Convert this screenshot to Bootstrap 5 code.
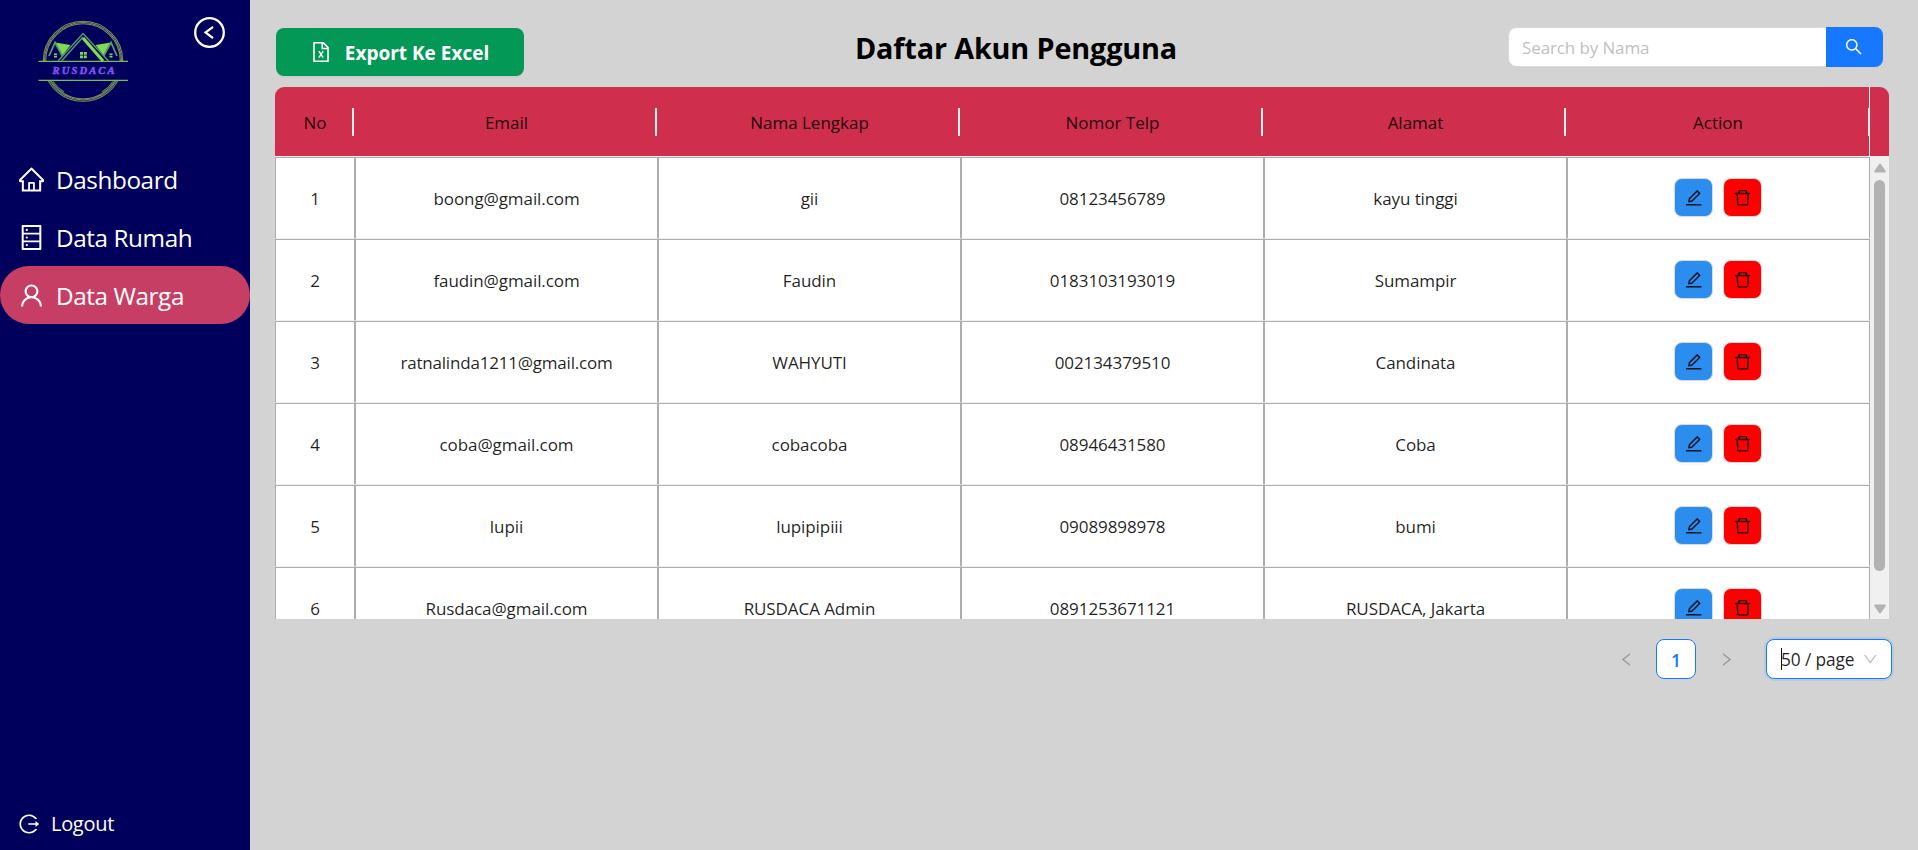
<!DOCTYPE html>
<html lang="id">
<head>
<meta charset="utf-8">
<meta name="viewport" content="width=device-width, initial-scale=1">
<title>Daftar Akun Pengguna</title>
<link href="https://cdn.jsdelivr.net/npm/bootstrap@5.3.0/dist/css/bootstrap.min.css" rel="stylesheet">
<style>
  body { font-family: "Open Sans", "Noto Sans", sans-serif; background: #d3d3d3; color: rgba(0,0,0,.88); font-size: 17px; line-height: 1.5; }
  .ico { width: 1em; height: 1em; fill: currentColor; display: block; flex: none; }
  /* sidebar */
  .side { width: 250px; background: #00005c; color: #fff; }
  .brand-row { height: 150px; padding: 17px 25px 0 38px; }
  .toggle-btn { width: 31px; height: 31px; }
  .menu-item { height: 58px; padding-left: 19px; gap: 12px; font-size: 24.3px; letter-spacing: -.42px; color: #fff; border-radius: 29px; }
  .menu-item:hover { color: #fff; }
  .menu-item span { padding-top: 2px; }
  .menu-item .ico { font-size: 25px; }
  .menu-item.active { background: #c73e64; }
  .logout { height: 52px; padding-left: 19px; gap: 12px; font-size: 20px; letter-spacing: -.3px; color: #fff; }
  /* toolbar */
  .main-area { padding: 0 25px; }
  .toolbar { height: 87px; padding: 27px 10px 0 1px; }
  .btn-excel { width: 248px; height: 48px; margin-top: 1px; border: 0; border-radius: 8px; background: #049857; color: #fff; font-size: 19px; font-weight: 700; gap: 14px; box-shadow: 0 2px 0 rgba(0,0,0,.02); }
  .btn-excel:hover { background: #049857; color: #fff; }
  .btn-excel span { padding-top: 2px; }
  .btn-excel .ico { font-size: 20px; }
  .page-title { font-size: 28.8px; letter-spacing: -.15px; font-weight: 700; color: #000; line-height: 42px; margin: 0; }
  .search { width: 375px; height: 40px; }
  .search .form-control { border: 1px solid #d9d9d9; border-radius: 8px 0 0 8px; font-size: 17px; letter-spacing: -.12px; padding: 0 13px; color: #222; height: 40px; }
  .search .form-control::placeholder { color: #bfbfbf; }
  .search .btn { width: 57px; padding: 0 2px 0 0; background: #1677ff; border: 0; border-radius: 0 8px 8px 0; color: #fff; font-size: 17.5px; }
  /* table */
  .tbl { width: 1614px; }
  .grid-row { display: grid; grid-template-columns: 80px repeat(5, 303px); }
  .grid-row > div { display: flex; align-items: center; justify-content: center; padding-top: 2px; }
  .tbl-head { height: 70px; background: #d02e4d; border-radius: 9px 9px 0 0; border-bottom: 1px solid #f0f0f0; font-weight: 500; }
  .tbl-head .grid-row > div { position: relative; }
  .tbl-head .grid-row > div::after { content: ""; position: absolute; right: 1px; top: 21px; width: 2px; height: 28px; background: #f0f0f0; }
  .tbl-head .grid-row > div:last-child { border-right: 1px solid #fff; }
  .tbl-head .grid-row > div:last-child::after { right: -1px; }
  .tbl-body { height: 462px; overflow: hidden; background: #fff; letter-spacing: -.08px; }
  .tbl-body .grid-row { height: 82px; }
  .tbl-body .grid-row > div { border: 1px solid #b0acac; border-bottom-color: #f0f0f0; }
  .tbl-body .grid-row > .tight { letter-spacing: -.2px; }
  .tbl-body .grid-row > .acts { gap: 10px; padding: 0 1px 1px 0; }
  .act { width: 39px; height: 39px; padding: 0; border: 1px solid #d9d9d9; border-radius: 8px; font-size: 17.5px; color: rgba(0,0,0,.88); box-shadow: 0 2px 0 rgba(0,0,0,.02); }
  .act-edit { background: #2b8eef; }
  .act-del { background: #f00; }
  .vbar { width: 19px; background: #f0f0f0; color: #b2b2b2; padding: 6px 0 5px; }
  .vbar .thumb { width: 11px; height: 391px; margin-top: 7px; border-radius: 6px; background: #b2b2b2; }
  /* pager */
  .pager { height: 40px; margin-top: 20px; margin-right: 1px; }
  .pager .step { width: 40px; font-size: 15px; color: #989898; }
  .pg-box { height: 40px; background: #fff; border: 1px solid #1677ff; border-radius: 8px; }
  .pg-num { width: 40px; color: #1677ff; font-weight: 600; font-size: 17.5px; margin: 0 10px; padding-top: 2px; }
  .pg-size { width: 126px; margin-left: 20px; padding: 0 14px; font-size: 17.3px; box-shadow: 0 0 0 2px rgba(5,145,255,.12); position: relative; }
  .pg-size span { padding-top: 2px; letter-spacing: -.1px; }
  .pg-size .ico { font-size: 14.5px; color: #bfbfbf; }
  .pg-size .caret-line { position: absolute; left: 14px; top: 8px; width: 1px; height: 22px; background: #111; }
</style>
</head>
<body>
<svg class="d-none" xmlns="http://www.w3.org/2000/svg">
  <symbol id="i-home" viewBox="64 64 896 896"><path d="M946.5 505L560.1 118.8l-25.9-25.9a31.5 31.5 0 00-44.4 0L77.5 505a63.9 63.9 0 00-18.8 46c.4 35.2 29.7 63.3 64.9 63.3h42.5V940h691.8V614.3h43.4c17.1 0 33.2-6.7 45.3-18.8a63.6 63.6 0 0018.7-45.3c0-17-6.7-33.1-18.8-45.2zM568 868H456V664h112v204zm217.9-325.7V868H632V640c0-22.1-17.9-40-40-40H432c-22.1 0-40 17.9-40 40v228H238.1V542.3h-96l370-369.7 23.1 23.1L882 542.3h-96.1z"/></symbol>
  <symbol id="i-data" viewBox="64 64 896 896"><path d="M832 64H192c-17.7 0-32 14.3-32 32v832c0 17.7 14.3 32 32 32h640c17.7 0 32-14.3 32-32V96c0-17.7-14.3-32-32-32zm-600 72h560v208H232V136zm560 480H232V408h560v208zm0 272H232V680h560v208zM304 240a40 40 0 1080 0 40 40 0 10-80 0zm0 272a40 40 0 1080 0 40 40 0 10-80 0zm0 272a40 40 0 1080 0 40 40 0 10-80 0z"/></symbol>
  <symbol id="i-user" viewBox="64 64 896 896"><path d="M858.5 763.6a374 374 0 00-80.6-119.5 375.63 375.63 0 00-119.5-80.6c-.4-.2-.8-.3-1.2-.5C719.5 518 760 444.7 760 362c0-137-111-248-248-248S264 225 264 362c0 82.7 40.5 156 102.8 201.1-.4.2-.8.3-1.2.5-44.8 18.9-85 46-119.5 80.6a375.63 375.63 0 00-80.6 119.5A371.7 371.7 0 00136 901.8a8 8 0 008 8.2h60c4.4 0 7.9-3.5 8-7.8 2-77.2 33-149.5 87.8-204.3 56.7-56.7 132-87.9 212.2-87.9s155.5 31.2 212.2 87.9C779 752.7 810 825 812 902.2c.1 4.4 3.6 7.8 8 7.8h60a8 8 0 008-8.2c-1-47.8-10.9-94.3-29.5-138.2zM512 534c-45.9 0-89.1-17.9-121.6-50.4S340 407.9 340 362c0-45.9 17.9-89.1 50.4-121.6S466.1 190 512 190s89.1 17.9 121.6 50.4S684 316.1 684 362c0 45.9-17.9 89.1-50.4 121.6S557.9 534 512 534z"/></symbol>
  <symbol id="i-logout" viewBox="64 64 896 896"><path d="M868 732h-70.3c-4.8 0-9.3 2.1-12.3 5.8-7 8.5-14.5 16.7-22.4 24.5a353.84 353.84 0 01-112.7 75.9A352.8 352.8 0 01512.4 866c-47.9 0-94.3-9.4-137.9-27.8a353.84 353.84 0 01-112.7-75.9 353.28 353.28 0 01-76-112.5C167.3 606.2 158 559.9 158 512s9.4-94.2 27.8-137.8c17.8-42.1 43.4-80 76-112.5s70.5-58.1 112.7-75.9c43.6-18.4 90-27.8 137.9-27.8 47.9 0 94.3 9.3 137.9 27.8 42.2 17.8 80.1 43.4 112.7 75.9 7.9 7.9 15.3 16.1 22.4 24.5 3 3.7 7.6 5.8 12.3 5.8H868c6.3 0 10.2-7 6.7-12.3C798 160.5 663.8 81.6 511.3 82 271.7 82.6 79.6 277.1 82 516.4 84.4 751.9 276.2 942 512.4 942c152.1 0 285.7-78.8 362.3-197.7 3.4-5.3-.4-12.3-6.7-12.3zm88.9-226.3L815 393.7c-5.3-4.2-13-.4-13 6.3v76H488c-4.4 0-8 3.6-8 8v56c0 4.4 3.6 8 8 8h314v76c0 6.7 7.8 10.5 13 6.3l141.900-112a8 8 0 000-12.600z"/></symbol>
  <symbol id="i-excel" viewBox="64 64 896 896"><path d="M854.6 288.6L639.4 73.4c-6-6-14.1-9.4-22.6-9.4H192c-17.7 0-32 14.3-32 32v832c0 17.7 14.3 32 32 32h640c17.7 0 32-14.3 32-32V311.3c0-8.5-3.4-16.7-9.4-22.7zM790.2 326H602V137.8L790.2 326zm1.8 562H232V136h302v216a42 42 0 0042 42h216v494z"/><path d="M415 475L610 765M610 475L415 765" fill="none" stroke="currentColor" stroke-width="62"/></symbol>
  <symbol id="i-search" viewBox="64 64 896 896"><path d="M909.6 854.5L649.9 594.8C690.2 542.7 712 479 712 412c0-80.2-31.3-155.4-87.9-212.1-56.6-56.7-132-87.9-212.1-87.9s-155.5 31.3-212.1 87.900C143.2 256.5 112 331.8 112 412c0 80.1 31.3 155.5 87.9 212.1C256.5 680.8 331.8 712 412 712c67 0 130.6-21.8 182.7-62l259.7 259.6a8.2 8.2 0 0011.6 0l43.6-43.5a8.2 8.2 0 000-11.6zM570.4 570.4C528 612.7 471.8 636 412 636s-116-23.3-158.4-65.6C211.3 528 188 471.8 188 412s23.3-116.1 65.6-158.4C296 211.3 352.2 188 412 188s116.1 23.2 158.4 65.6S636 352.2 636 412s-23.3 116.1-65.6 158.4z"/></symbol>
  <symbol id="i-edit" viewBox="64 64 896 896"><path d="M257.7 752c2 0 4-.2 6-.5L431.9 722c2-.4 3.9-1.3 5.3-2.8l423.9-423.9a9.96 9.96 0 000-14.1L694.9 114.9c-1.9-1.9-4.4-2.9-7.1-2.9s-5.2 1-7.1 2.9L256.8 538.8c-1.5 1.5-2.4 3.3-2.8 5.3l-29.5 168.2a33.5 33.5 0 009.4 29.8c6.6 6.4 14.9 9.9 23.8 9.9zm67.4-174.4L687.8 215l73.3 73.3-362.7 362.6-88.9 15.7 15.6-89zM880 836H144c-17.7 0-32 14.3-32 32v36c0 4.4 3.6 8 8 8h784c4.4 0 8-3.6 8-8v-36c0-17.7-14.3-32-32-32z"/></symbol>
  <symbol id="i-del" viewBox="64 64 896 896"><path d="M360 184h-8c4.4 0 8-3.6 8-8v8h304v-8c0 4.4 3.6 8 8 8h-8v72h72v-80c0-35.3-28.7-64-64-64H352c-35.3 0-64 28.7-64 64v80h72v-72zm504 72H160c-17.7 0-32 14.3-32 32v32c0 4.4 3.6 8 8 8h60.4l24.7 523c1.6 34.1 29.8 61 63.9 61h454c34.2 0 62.3-26.8 63.9-61l24.7-523H888c4.400 0 8-3.600 8-8v-32c0-17.700-14.300-32-32-32zM731.3 840H292.7l-24.2-512h487l-24.2 512z"/></symbol>
  <symbol id="i-left" viewBox="64 64 896 896"><path d="M724 218.3V141c0-6.7-7.7-10.4-12.9-6.3L260.3 486.8a31.86 31.86 0 000 50.3l450.8 352.1c5.3 4.1 12.9.4 12.9-6.3v-77.3c0-4.9-2.3-9.6-6.1-12.6l-360-281 360-281.100c3.800-3 6.100-7.700 6.100-12.600z"/></symbol>
  <symbol id="i-right" viewBox="64 64 896 896"><path transform="matrix(-1 0 0 1 1024 0)" d="M724 218.3V141c0-6.7-7.7-10.4-12.9-6.3L260.3 486.8a31.86 31.86 0 000 50.3l450.8 352.1c5.3 4.1 12.9.4 12.9-6.3v-77.3c0-4.9-2.3-9.6-6.1-12.6l-360-281 360-281.100c3.800-3 6.100-7.700 6.100-12.600z"/></symbol>
  <symbol id="i-down" viewBox="64 64 896 896"><path d="M884 256h-75c-5.1 0-9.9 2.5-12.9 6.6L512 654.2 227.9 262.6c-3-4.1-7.8-6.6-12.9-6.6h-75c-6.5 0-10.3 7.4-6.5 12.7l352.6 486.1c12.8 17.6 39 17.6 51.7 0l352.6-486.1c3.9-5.3.1-12.7-6.4-12.7z"/></symbol>
</svg>

<div class="d-flex vh-100 overflow-hidden">
  <aside class="side d-flex flex-column flex-shrink-0">
    <div class="brand-row d-flex justify-content-between align-items-start">
      <svg width="91" height="90" viewBox="0 0 91 90" fill="none">
        <path d="M5.300 44A39.700 39.700 0 0 1 84.700 44M7.700 44A37.300 37.300 0 0 1 82.300 44M10.100 63.500A39.700 39.700 0 0 0 79.900 63.500M12.900 63.500A37.300 37.300 0 0 0 77.100 63.500" stroke="#5fa052" stroke-width="1.100"/>
        <path d="M6.500 44A38.500 38.500 0 0 1 83.500 44M11.500 63.500A38.500 38.500 0 0 0 78.500 63.500" stroke="#c07a60" stroke-width="1"/>
        <path d="M.5 44.300H90M.5 63.300H90" stroke="#6fc353" stroke-width="1.200"/>
        <path d="M15 64.500q4 6 11 10.500M75 64.500q-4 6-11 10.500" stroke="#4d8a55" stroke-width="1.200"/>
        <path d="M17 25.500l15.500 2.500-8.500 11zM73 25.500l-15.500 2.500 8.500 11z" fill="#7ddc52"/>
        <path d="M11 39l6-13.500 7.500 13.500M79 39l-6-13.500L65.500 39" stroke="#5b9b63" stroke-width="1.800"/>
        <path d="M20 44L45 16.500l25.500 27.500M23.500 44L45 20" stroke="#5b9b63" stroke-width="1.400"/>
        <path d="M45 21L65 44" stroke="#7ddc52" stroke-width="3.200"/>
        <path d="M42 35h3v2.800h-3zM45.800 35h3v2.800h-3zM42 38.500h3v2.700h-3zM45.800 38.500h3v2.700h-3zM16 36.500h3v1.800h-3zM16 39h3v1.500h-3zM71.500 36.500h3v1.800h-3zM71.500 39h3v1.500h-3z" fill="#7ddc52"/>
        <text x="14.500" y="57" textLength="62" lengthAdjust="spacing" font-family="'Liberation Serif', serif" font-weight="700" font-style="italic" font-size="10.500" fill="#8650f5" stroke="#8650f5" stroke-width=".5">RUSDACA</text>
      </svg>
      <svg class="toggle-btn" viewBox="0 0 31 31" fill="none" stroke="#fff"><circle cx="15.500" cy="15.500" r="14.300" stroke-width="2.300"/><path d="M19 9.800L11.500 15.500L19 21.200" stroke-width="2.200"/></svg>
    </div>
    <nav class="nav flex-column flex-nowrap">
      <a class="menu-item d-flex align-items-center text-decoration-none" href="#"><svg class="ico"><use href="#i-home"/></svg><span>Dashboard</span></a>
      <a class="menu-item d-flex align-items-center text-decoration-none" href="#"><svg class="ico"><use href="#i-data"/></svg><span>Data Rumah</span></a>
      <a class="menu-item active d-flex align-items-center text-decoration-none" href="#"><svg class="ico"><use href="#i-user"/></svg><span>Data Warga</span></a>
    </nav>
    <a class="logout mt-auto d-flex align-items-center text-decoration-none" href="#"><svg class="ico"><use href="#i-logout"/></svg><span>Logout</span></a>
  </aside>

  <main class="main-area flex-grow-1">
    <div class="toolbar d-flex justify-content-between align-items-start">
      <button class="btn btn-excel d-flex align-items-center justify-content-center"><svg class="ico"><use href="#i-excel"/></svg><span>Export Ke Excel</span></button>
      <h1 class="page-title">Daftar Akun Pengguna</h1>
      <div class="input-group search flex-nowrap">
        <input class="form-control" type="text" placeholder="Search by Nama">
        <button class="btn d-flex align-items-center justify-content-center" aria-label="Search"><svg class="ico"><use href="#i-search"/></svg></button>
      </div>
    </div>

    <section class="tbl">
      <div class="tbl-head">
        <div class="grid-row h-100">
          <div>No</div><div>Email</div><div>Nama Lengkap</div><div>Nomor Telp</div><div>Alamat</div><div>Action</div>
        </div>
      </div>
      <div class="tbl-body d-flex">
        <div class="flex-shrink-0">
          <div class="grid-row"><div>1</div><div>boong@gmail.com</div><div>gii</div><div>08123456789</div><div>kayu tinggi</div><div class="acts"><button class="btn act act-edit d-flex align-items-center justify-content-center"><svg class="ico"><use href="#i-edit"/></svg></button><button class="btn act act-del d-flex align-items-center justify-content-center"><svg class="ico"><use href="#i-del"/></svg></button></div></div>
          <div class="grid-row"><div>2</div><div>faudin@gmail.com</div><div>Faudin</div><div>0183103193019</div><div>Sumampir</div><div class="acts"><button class="btn act act-edit d-flex align-items-center justify-content-center"><svg class="ico"><use href="#i-edit"/></svg></button><button class="btn act act-del d-flex align-items-center justify-content-center"><svg class="ico"><use href="#i-del"/></svg></button></div></div>
          <div class="grid-row"><div>3</div><div class="tight">ratnalinda1211@gmail.com</div><div>WAHYUTI</div><div>002134379510</div><div>Candinata</div><div class="acts"><button class="btn act act-edit d-flex align-items-center justify-content-center"><svg class="ico"><use href="#i-edit"/></svg></button><button class="btn act act-del d-flex align-items-center justify-content-center"><svg class="ico"><use href="#i-del"/></svg></button></div></div>
          <div class="grid-row"><div>4</div><div>coba@gmail.com</div><div>cobacoba</div><div>08946431580</div><div>Coba</div><div class="acts"><button class="btn act act-edit d-flex align-items-center justify-content-center"><svg class="ico"><use href="#i-edit"/></svg></button><button class="btn act act-del d-flex align-items-center justify-content-center"><svg class="ico"><use href="#i-del"/></svg></button></div></div>
          <div class="grid-row"><div>5</div><div>lupii</div><div>lupipipiii</div><div>09089898978</div><div>bumi</div><div class="acts"><button class="btn act act-edit d-flex align-items-center justify-content-center"><svg class="ico"><use href="#i-edit"/></svg></button><button class="btn act act-del d-flex align-items-center justify-content-center"><svg class="ico"><use href="#i-del"/></svg></button></div></div>
          <div class="grid-row"><div>6</div><div>Rusdaca@gmail.com</div><div>RUSDACA Admin</div><div>0891253671121</div><div>RUSDACA, Jakarta</div><div class="acts"><button class="btn act act-edit d-flex align-items-center justify-content-center"><svg class="ico"><use href="#i-edit"/></svg></button><button class="btn act act-del d-flex align-items-center justify-content-center"><svg class="ico"><use href="#i-del"/></svg></button></div></div>
        </div>
        <div class="vbar d-flex flex-column align-items-center">
          <svg width="12" height="10" viewBox="0 0 12 10" fill="currentColor"><path d="M5 1.200Q6 0 7 1.200L11.700 8q.5 1.400-1 1.500H1.300Q-.2 9.400.3 8z"/></svg>
          <div class="thumb"></div>
          <svg class="mt-auto" width="12" height="10" viewBox="0 0 12 10" fill="currentColor"><path d="M5 8.800Q6 10 7 8.800L11.700 2q.5-1.400-1-1.500H1.300Q-.2.6.3 2z"/></svg>
        </div>
      </div>
    </section>

    <div class="pager d-flex justify-content-end align-items-center">
      <span class="step d-flex justify-content-center"><svg class="ico"><use href="#i-left"/></svg></span>
      <span class="pg-box pg-num d-flex align-items-center justify-content-center">1</span>
      <span class="step d-flex justify-content-center"><svg class="ico"><use href="#i-right"/></svg></span>
      <div class="pg-box pg-size d-flex align-items-center justify-content-between"><span>50 / page</span><svg class="ico"><use href="#i-down"/></svg><i class="caret-line"></i></div>
    </div>
  </main>
</div>
<script src="https://cdn.jsdelivr.net/npm/bootstrap@5.3.0/dist/js/bootstrap.bundle.min.js"></script>
</body>
</html>
